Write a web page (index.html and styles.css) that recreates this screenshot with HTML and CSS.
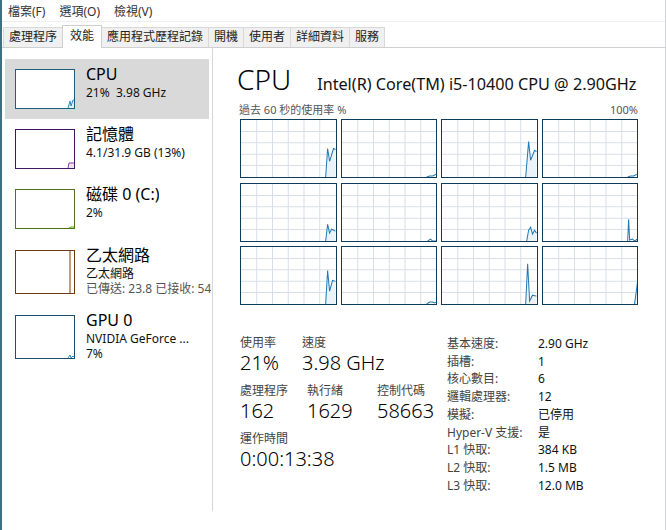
FILE: index.html
```html
<!DOCTYPE html>
<html lang="zh-Hant">
<head>
<meta charset="utf-8">
<title>工作管理員</title>
<link rel="stylesheet" href="styles.css">
</head>
<body>
<div class="window">
  <div class="menubar">
    <span>檔案(F)</span><span>選項(O)</span><span>檢視(V)</span>
  </div>
  <div class="tabbar">
    <div class="tab">處理程序</div>
    <div class="tab active">效能</div>
    <div class="tab">應用程式歷程記錄</div>
    <div class="tab">開機</div>
    <div class="tab">使用者</div>
    <div class="tab">詳細資料</div>
    <div class="tab">服務</div>
  </div>
  <div class="main">
    <aside class="sidebar">
      <div class="item selected">
        <div class="thumb cpu"><svg viewBox="0 0 58 38" preserveAspectRatio="none"><polygon class="fill-cpu" points="52,38 54,31 55,36 57,30 58,30 58,38"/><polyline class="ln-cpu" points="52,38 54,31 55,36 57,30 58,30"/></svg></div>
        <div class="info"><div class="title">CPU</div><div class="sub">21%&nbsp; 3.98 GHz</div></div>
      </div>
      <div class="item">
        <div class="thumb mem"><svg viewBox="0 0 58 38" preserveAspectRatio="none"><polygon class="fill-mem" points="52,38 53,33 58,33 58,38"/><polyline class="ln-mem" points="52,38 53,33 58,33"/></svg></div>
        <div class="info"><div class="title">記憶體</div><div class="sub">4.1/31.9 GB (13%)</div></div>
      </div>
      <div class="item">
        <div class="thumb disk"><svg viewBox="0 0 58 38" preserveAspectRatio="none"><polyline class="ln-disk" points="53,38 55,37 58,37"/></svg></div>
        <div class="info"><div class="title">磁碟 0 (C:)</div><div class="sub">2%</div></div>
      </div>
      <div class="item tall">
        <div class="thumb net"><svg viewBox="0 0 58 42" preserveAspectRatio="none"><polyline class="ln-net" points="54,0 54,42"/></svg></div>
        <div class="info"><div class="title">乙太網路</div><div class="sub">乙太網路</div><div class="sub dim">已傳送: 23.8 已接收: 54</div></div>
      </div>
      <div class="item tall">
        <div class="thumb gpu"><svg viewBox="0 0 58 42" preserveAspectRatio="none"><polyline class="ln-gpu" points="52,42 54,39 55,42 57,40 58,41"/></svg></div>
        <div class="info"><div class="title">GPU 0</div><div class="sub">NVIDIA GeForce ...</div><div class="sub">7%</div></div>
      </div>
    </aside>
    <section class="panel">
      <div class="header">
        <span class="big">CPU</span>
        <span class="model">Intel(R) Core(TM) i5-10400 CPU @ 2.90GHz</span>
      </div>
      <div class="caption"><span>過去 60 秒的使用率 %</span><span>100%</span></div>
      <div class="graphs">
        <div class="cell"><svg viewBox="0 0 96 58" preserveAspectRatio="none"><path class="gl" d="M16 0V58M32 0V58M48 0V58M64 0V58M80 0V58M0 11.6H96M0 23.2H96M0 34.8H96M0 46.4H96"/><polygon class="fa" points="86,58 88,29 90,42 94,29 96,30 96,58"/><polyline class="sl" points="86,58 88,29 90,42 94,29 96,30"/></svg></div>
        <div class="cell"><svg viewBox="0 0 96 58" preserveAspectRatio="none"><path class="gl" d="M16 0V58M32 0V58M48 0V58M64 0V58M80 0V58M0 11.6H96M0 23.2H96M0 34.8H96M0 46.4H96"/><polyline class="sl" points="86,58 89,57 92,57 94,56 96,55"/></svg></div>
        <div class="cell"><svg viewBox="0 0 96 58" preserveAspectRatio="none"><path class="gl" d="M16 0V58M32 0V58M48 0V58M64 0V58M80 0V58M0 11.6H96M0 23.2H96M0 34.8H96M0 46.4H96"/><polygon class="fa" points="85,58 88,22 90,41 94,31 96,32 96,58"/><polyline class="sl" points="85,58 88,22 90,41 94,31 96,32"/></svg></div>
        <div class="cell"><svg viewBox="0 0 96 58" preserveAspectRatio="none"><path class="gl" d="M16 0V58M32 0V58M48 0V58M64 0V58M80 0V58M0 11.6H96M0 23.2H96M0 34.8H96M0 46.4H96"/><polyline class="sl" points="86,58 89,57 92,57 94,56 96,55"/></svg></div>

        <div class="cell"><svg viewBox="0 0 96 58" preserveAspectRatio="none"><path class="gl" d="M16 0V58M32 0V58M48 0V58M64 0V58M80 0V58M0 11.6H96M0 23.2H96M0 34.8H96M0 46.4H96"/><polygon class="fa" points="86,58 88,41 90,50 92,46 96,48 96,58"/><polyline class="sl" points="86,58 88,41 90,50 92,46 96,48"/></svg></div>
        <div class="cell"><svg viewBox="0 0 96 58" preserveAspectRatio="none"><path class="gl" d="M16 0V58M32 0V58M48 0V58M64 0V58M80 0V58M0 11.6H96M0 23.2H96M0 34.8H96M0 46.4H96"/><polyline class="sl" points="87,58 90,56 92,58 96,58"/></svg></div>
        <div class="cell"><svg viewBox="0 0 96 58" preserveAspectRatio="none"><path class="gl" d="M16 0V58M32 0V58M48 0V58M64 0V58M80 0V58M0 11.6H96M0 23.2H96M0 34.8H96M0 46.4H96"/><polygon class="fa" points="86,58 88,47 90,44 92,51 94,47 96,50 96,58"/><polyline class="sl" points="86,58 88,47 90,44 92,51 94,47 96,50"/></svg></div>
        <div class="cell"><svg viewBox="0 0 96 58" preserveAspectRatio="none"><path class="gl" d="M16 0V58M32 0V58M48 0V58M64 0V58M80 0V58M0 11.6H96M0 23.2H96M0 34.8H96M0 46.4H96"/><polyline class="sl" points="86,58 87,36 88,57 91,56 93,58 96,56"/></svg></div>

        <div class="cell"><svg viewBox="0 0 96 58" preserveAspectRatio="none"><path class="gl" d="M16 0V58M32 0V58M48 0V58M64 0V58M80 0V58M0 11.6H96M0 23.2H96M0 34.8H96M0 46.4H96"/><polygon class="fa" points="86,58 88,24 90,45 93,34 96,35 96,58"/><polyline class="sl" points="86,58 88,24 90,45 93,34 96,35"/></svg></div>
        <div class="cell"><svg viewBox="0 0 96 58" preserveAspectRatio="none"><path class="gl" d="M16 0V58M32 0V58M48 0V58M64 0V58M80 0V58M0 11.6H96M0 23.2H96M0 34.8H96M0 46.4H96"/><polyline class="sl" points="86,58 89,56 92,56 94,57 96,56"/></svg></div>
        <div class="cell"><svg viewBox="0 0 96 58" preserveAspectRatio="none"><path class="gl" d="M16 0V58M32 0V58M48 0V58M64 0V58M80 0V58M0 11.6H96M0 23.2H96M0 34.8H96M0 46.4H96"/><polygon class="fa" points="85,58 87,17 89,55 92,49 96,50 96,58"/><polyline class="sl" points="85,58 87,17 89,55 92,49 96,50"/></svg></div>
        <div class="cell"><svg viewBox="0 0 96 58" preserveAspectRatio="none"><path class="gl" d="M16 0V58M32 0V58M48 0V58M64 0V58M80 0V58M0 11.6H96M0 23.2H96M0 34.8H96M0 46.4H96"/><polygon class="fa" points="93,58 96,36 96,58"/><polyline class="sl" points="93,58 96,36"/></svg></div>
      </div>
      <div class="stats">
        <div class="left">
          <div class="row">
            <div class="grp w62"><div class="lbl">使用率</div><div class="val">21%</div></div>
            <div class="grp"><div class="lbl">速度</div><div class="val">3.98 GHz</div></div>
          </div>
          <div class="row">
            <div class="grp w66"><div class="lbl">處理程序</div><div class="val">162</div></div>
            <div class="grp w71"><div class="lbl">執行緒</div><div class="val">1629</div></div>
            <div class="grp"><div class="lbl">控制代碼</div><div class="val">58663</div></div>
          </div>
          <div class="row">
            <div class="grp"><div class="lbl">運作時間</div><div class="val">0:00:13:38</div></div>
          </div>
        </div>
        <dl class="specs">
          <dt>基本速度:</dt><dd>2.90 GHz</dd>
          <dt>插槽:</dt><dd>1</dd>
          <dt>核心數目:</dt><dd>6</dd>
          <dt>邏輯處理器:</dt><dd>12</dd>
          <dt>模擬:</dt><dd>已停用</dd>
          <dt>Hyper-V 支援:</dt><dd>是</dd>
          <dt>L1 快取:</dt><dd>384 KB</dd>
          <dt>L2 快取:</dt><dd>1.5 MB</dd>
          <dt>L3 快取:</dt><dd>12.0 MB</dd>
        </dl>
      </div>
    </section>
  </div>
</div>
</body>
</html>
```
FILE: styles.css
```css
* { box-sizing: border-box; }
html, body { margin: 0; padding: 0; }
body {
  width: 666px;
  height: 530px;
  overflow: hidden;
  background: #fff;
  font-family: "Noto Sans", "Noto Sans CJK TC", sans-serif;
  color: #000;
}
.window {
  height: 530px;
  border-left: 2px solid #3a7282;
  border-right: 1px solid #cfd3d4;
  display: flex;
  flex-direction: column;
}
.menubar {
  height: 22px;
  display: flex;
  gap: 14px;
  padding: 3px 0 0 6px;
  font-size: 12px;
  line-height: 17px;
  color: #333;
  border-bottom: 1px solid #efefef;
}
.tabbar {
  height: 26px;
  display: flex;
  align-items: flex-end;
  padding-left: 2px;
  border-bottom: 1px solid #cfcfcf;
}
.tab {
  height: 20px;
  padding: 0 5px;
  font-size: 12px;
  line-height: 18px;
  color: #222;
  background: #f0f0f0;
  border: 1px solid #d9d9d9;
  border-bottom: none;
  margin-left: -1px;
  white-space: nowrap;
}
.tab.active {
  height: 23px;
  background: #fff;
  padding: 0 7px;
  line-height: 20px;
  margin-bottom: -1px;
  border-color: #cfcfcf;
  position: relative;
}
.main {
  flex: 1;
  display: flex;
  min-height: 0;
}
.sidebar {
  width: 211px;
  padding: 11px 0 0 3px;
  border-right: 1px solid #d6d6d6;
  margin-bottom: 19px;
  overflow: hidden;
}
.item {
  display: flex;
  gap: 11px;
  padding: 10px 0 10px 10px;
  height: 60px;
  white-space: nowrap;
}
.item.tall { height: 65px; padding-top: 11px; }
.item.selected { background: #d9d9d9; margin-right: 3px; }
.thumb {
  width: 60px;
  height: 40px;
  flex: none;
  background: #fff;
  border: 1px solid;
}
.item.tall .thumb { height: 44px; }
.thumb svg { display: block; width: 100%; height: 100%; }
.thumb.cpu { border-color: #1d5f78; }
.thumb.mem { border-color: #44175c; }
.thumb.disk { border-color: #4c7418; }
.thumb.net { border-color: #6e3a10; }
.thumb.gpu { border-color: #1c4f6c; }
polyline { fill: none; stroke-width: 1; vector-effect: non-scaling-stroke; }
.ln-cpu { stroke: #2a8ac0; }
.fill-cpu { fill: #e3f0f8; }
.ln-mem { stroke: #8b3cb0; }
.fill-mem { fill: #efe4f4; }
.ln-disk { stroke: #4da60c; }
.ln-net { stroke: #7a3d08; }
.ln-gpu { stroke: #2a8ac0; }
.info {
  margin-top: -5px;
  display: flex;
  flex-direction: column;
  overflow: hidden;
}
.title { font-size: 16px; line-height: 21px; }
.sub { font-size: 12px; line-height: 15px; color: #111; }
.sub.dim { color: #555; }

.panel {
  flex: 1;
  padding: 13px 0 0 24px;
  min-width: 0;
}
.header {
  display: flex;
  align-items: baseline;
  gap: 26px;
  height: 38px;
}
.big { font-size: 28px; line-height: 36px; font-weight: 300; }
.model { font-size: 16.2px; color: #111; }
.caption {
  width: 401px;
  display: flex;
  justify-content: space-between;
  font-size: 11px;
  line-height: 13px;
  color: #555;
  margin-top: 4px;
  padding-left: 2px;
}
.graphs {
  width: 398px;
  margin: 3px 0 0 3px;
  display: grid;
  grid-template-columns: repeat(4, 1fr);
  grid-template-rows: repeat(3, 59px);
  column-gap: 4px;
  row-gap: 4.5px;
}
.cell {
  border: 1px solid #0e3b5a;
  background: #fff;
}
.cell svg { display: block; width: 100%; height: 100%; }
.gl { stroke: #d7dee7; stroke-width: 1; fill: none; vector-effect: non-scaling-stroke; }
.sl { stroke: #1f78b0; }
.fa { fill: #eaf3f9; }

.stats {
  display: flex;
  margin-top: 30px;
  padding-left: 3px;
}
.left { width: 207px; }
.row { display: flex; margin-bottom: 8px; }
.grp { display: flex; flex-direction: column; }
.w62 { width: 62px; }
.w66 { width: 67px; }
.w71 { width: 70px; }
.lbl { font-size: 12px; line-height: 16px; color: #444; }
.val { font-size: 20px; line-height: 24px; font-weight: 300; color: #000; }
.specs {
  margin: 0;
  display: grid;
  grid-template-columns: 91px auto;
  font-size: 12px;
  line-height: 17.7px;
}
.specs dt { color: #444; }
.specs dd { margin: 0; color: #111; }
```
